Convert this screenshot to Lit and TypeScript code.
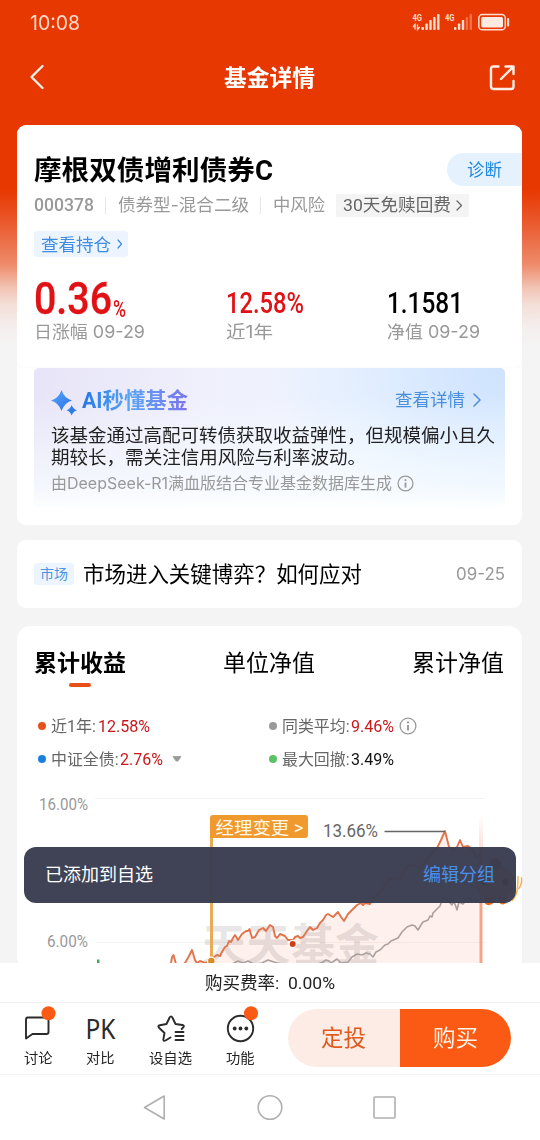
import { LitElement, html, css, svg } from "lit";
import { customElement, property } from "lit/decorators.js";
import { styleMap } from "lit/directives/style-map.js";

/** One line of text that takes up exactly `w` pixels. */
@customElement("fit-label")
class FitLabel extends LitElement {
  @property({ type: Number }) w = 0;
  @property({ type: Number }) scale = 1;
  static styles = css`
    :host { display: block; flex: none; white-space: nowrap; }
    .text { display: inline-block; transform-origin: 0 50%; }
    .box { display: block; }
  `;
  firstUpdated() {
    this.measure();
    document.fonts.ready.then(() => this.measure());
  }
  measure() {
    const el = this.renderRoot.querySelector(".text") as HTMLElement;
    const natural = parseFloat(getComputedStyle(el).width);
    if (natural > 0) this.scale = this.w / natural;
  }
  render() {
    return html`<span class="box" style=${styleMap({ width: this.w + "px" })}
      ><span class="text" style=${styleMap({ transform: `scaleX(${this.scale})` })}><slot></slot></span></span>`;
  }
}

const fundLine =
  "171,963 172,957 173.5,955 176,964 180,966 185,963 189,956 192,950 195,960 197,963 200,961 205,963 211,961 214,957 217,955 220,956 222,952 225,947 227,946 229,941 231,942 233,938 235,935 238,940 242,934 246,931 248,931 249.5,929 252,938 255,937 259,930 263,928 266,931 270,925 273,927 275,936 277,938 280,934 285,936 288,940 293,940 295,937 298,936 300,938 303,937 307,931 310,927 313,930 317,928 320,923 323,920 326,915 328,914 333,917 338,912 341,917 344,921 348,914 352,910 357,905 361,903 363,905 365,903 370,904 374,897 382,890 388,880 395,878 400,880 407,866 413,865 420,868 430,855 437,848 441,840 445,831 449,847 453,850 457,847 460,840 463,847 468,846 472,849 477,858 481,853";
const indexLine =
  "232,964 238,961 243,963 248,961 254,964 262,963 268,960 274,962 290,966 318,964 323,962 326,960 329,961 331,963 334,961 337,959 341,963 348,962 352,957 357,954 362,955 366,953 370,954 373,957 376,952 380,950 385,945 388,944 391,941 398,938 402,932 407,927 412,925 415,926 418,930 421,925 423,922 428,920 430,916 432,917 433,913 438,908 440,906 443,898 447,900 452,905 453,902 455,904 457,910 459,902 463,904 468,898 481,903";

@customElement("app-root")
export class AppRoot extends LitElement {
  static styles = css`
    :host {
      display: block; position: relative; width: 540px; height: 1140px; overflow: hidden;
      font-family: Roboto, "Noto Sans CJK SC", sans-serif; color: #000;
      background: #f4f4f4;
    }
    * { box-sizing: border-box; }
    svg { display: block; flex: none; }
    .wide { font-family: Inter, "Noto Sans CJK SC", sans-serif; }
    .screen { display: flex; flex-direction: column; height: 1140px; }
    .scroll {
      height: 962.5px; overflow: hidden; padding: 0 18px 0 17px; flex: none;
      background: linear-gradient(#e83802 0, #e83802 190px, #ea5c30 225px, #ee8c6c 265px, #f2c4b5 288px, #f3dfd8 305px, #f4f0ef 330px, #f4f4f4 348px);
    }
    .row { display: flex; align-items: center; }

    .status { height: 46px; padding: 0 0 0 13px; justify-content: space-between; }
    .status-icons { margin: 0 11px 0 0; }
    .clock { color: #ffd9cb; font-size: 20px; line-height: 24px; }
    .nav { height: 62px; padding: 0 6px 0 11px; }
    .nav-title { color: #fff; font-weight: 700; font-size: 22.5px; line-height: 30px; margin: 2px auto 0 178px; }

    .card { background: #fff; border-radius: 9px; width: 505px; }
    .fund { margin-top: 17px; height: 400px; overflow: hidden; background: #fcfcfc; }
    .summary { height: 242px; background: #fff; border-radius: 9px; padding: 28px 0 0 17px; }
    .headline { height: 33px; justify-content: space-between; }
    .fund-name { font-size: 27.5px; font-weight: 700; line-height: 36px; margin-top: 2px; }
    .diagnose { width: 75px; height: 33px; border-radius: 17px 0 0 17px; background: #e5f2fe; color: #1f87e0; font-size: 17.3px; padding: 0 0 2px 20px; }
    .meta { height: 24px; margin-top: 7px; font-size: 17.3px; line-height: 24px; color: #999; }
    .code { font-size: 18px; font-weight: 500; }
    .bar { width: 1px; height: 17px; background: #e6e6e6; margin: 0 11.5px 0 11px; }
    .bar2 { margin: 0 11.5px; }
    .fee { height: 23px; background: #f4f4f4; color: #666; padding: 0 6px 0 7px; margin-left: 11.5px; gap: 5px; }
    .hold { width: 94px; height: 26px; margin-top: 14px; padding: 0 0 1px 7px; gap: 6px; background: #ebf4ff; border-radius: 3px; color: #3f8ce0; font-size: 17.3px; }
    .figures { margin-top: 18px; display: grid; grid-template-columns: 192px 160.5px auto; }
    .figure { height: 45px; display: flex; align-items: flex-end; }
    .value { font-weight: 500; font-size: 29px; line-height: 34px; }
    .big { font-size: 45px; line-height: 38px; margin-bottom: 2px; -webkit-text-stroke: .3px #e60d10; }
    .pct { font-size: 24px; line-height: 22px; margin-left: 1px; font-weight: 500; }
    .red { color: #e01216; }
    .caption { font-size: 17.3px; line-height: 24px; color: #999; }

    .ai-wrap { background: #fff; height: 158px; margin-top: 1px; padding: 0 17px; }
    .ai {
      height: 140px; border-radius: 5px; padding: 20px 0 0 17px;
      background:
        linear-gradient(rgba(255,255,255,0) 20%, rgba(248,252,255,.75) 85%, #fdfeff 100%),
        radial-gradient(ellipse 240px 160px at 100% 0, #cfe3fe, rgba(233,243,255,0)),
        linear-gradient(100deg, #e7e4f7, #eff0fc 35%, #eff6ff 70%, #e3f0ff);
    }
    .ai-head { height: 26px; }
    .ai-title { font-size: 21.3px; font-weight: 700; line-height: 26px; margin-left: 4px; }
    .grad { background: linear-gradient(90deg, #2478e8, #5aa5f4 45%, #6c8af0 75%, #7c74e8); -webkit-background-clip: text; background-clip: text; color: transparent; }
    .more { margin-left: auto; margin-right: 24.5px; gap: 8px; color: #4a8fdc; font-size: 17.4px; line-height: 24px; margin-top: -2px; }
    .ai-text { font-size: 18.5px; line-height: 21.5px; color: #222; margin-top: 12px; }
    .ai-note { font-size: 16px; line-height: 22px; height: 22px; color: #999; margin-top: 3px; gap: 5px; }

    .news { height: 68px; margin-top: 15px; padding: 0 17px; border-radius: 9px; }
    .tag { width: 40px; height: 22px; border-radius: 3px; background: #ebf4ff; color: #4d94e2; font-size: 14px; justify-content: center; margin-right: 9px; padding-bottom: 2px; }
    .news-title { font-size: 21.4px; line-height: 30px; margin-top: 1px; }
    .date { margin-left: auto; color: #999; font-size: 17px; }

    .chart-card { margin-top: 18px; height: 345px; padding: 22px 18px 0 17px; border-radius: 14px; }
    .tabs { justify-content: space-between; height: 32px; font-size: 22.7px; line-height: 32px; }
    .active { font-weight: 700; }
    .underline { width: 22px; height: 4px; border-radius: 2px; background: #e8501a; margin: 3px 0 0 35px; }
    .legend { display: grid; grid-template-columns: 231px auto; grid-auto-rows: 33px; margin: 22px 0 0 4px; font-size: 16px; color: #666; }
    .dot { width: 8px; height: 8px; border-radius: 50%; margin-right: 5px; flex: none; }
    .name { margin-top: -1px; }
    .num { margin: 1px 0 0 1.5px; }
    .black { color: #111; }
    .crimson { color: #c8181c; }
    .gap { margin-left: 5px; }
    .chart { margin: 10px 0 0 -17px; overflow: visible; }

    .toast {
      position: absolute; left: 24px; top: 847px; width: 492px; height: 55.5px; border-radius: 12px;
      background: rgba(58, 61, 79, .97); padding: 0 21px 0 21px; justify-content: space-between;
      color: #fff; font-size: 18px; line-height: 26px;
    }
    .edit { color: #4a90ea; }

    .rate { height: 39.5px; padding-bottom: 1px; background: #fff; justify-content: center; font-size: 17.4px; color: #222; flex: none; }
    .actions { height: 72.5px; background: #fff; border-top: 1px solid #f1f1f1; border-bottom: 1px solid #f4f4f4; flex: none; padding-left: 3px; }
    .action { width: 70px; height: 70px; display: flex; flex-direction: column; align-items: center; padding-top: 5px; font-size: 14.2px; line-height: 20px; color: #222; gap: 4px; }
    .action svg { overflow: visible; }
    .action.pk { width: 55px; }
    .action.star { width: 85px; }
    .action.fn { width: 55px; }
    .buttons { display: flex; margin-left: 20px; height: 58px; }
    .btn { width: 111.5px; display: flex; align-items: center; justify-content: center; font-size: 22.5px; line-height: 32px; }
    .plan { background: #fcece5; color: #df5a1c; border-radius: 29px 0 0 29px; }
    .buy { background: #fb5a14; color: #fff1e4; border-radius: 0 29px 29px 0; }
    .sysnav { flex: 1; background: #fff; }
  `;

  chevron(w: number, h: number, stroke: string, width: number) {
    return html`<svg width=${w + 2} height=${h + 2} viewBox="-1 -1 ${w + 2} ${h + 2}" fill="none" stroke=${stroke} stroke-width=${width}>
      <path d="M0 0L${w} ${h / 2}L0 ${h}" stroke-linecap="round" stroke-linejoin="round" /></svg>`;
  }

  info(size: number, color = "#999") {
    return html`<svg width=${size} height=${size} viewBox="0 0 18 18" fill="none" stroke=${color}>
      <circle cx="9" cy="9" r="7.9" stroke-width="1.3" />
      <circle cx="9" cy="5.4" r="1.1" fill=${color} stroke="none" /><path d="M9 8v5.4" stroke-width="1.9" /></svg>`;
  }

  statusIcons() {
    const bars = (x: number, dim: number) =>
      [3, 6.5, 10, 13, 16].map((h, i) => svg`<rect x=${x + i * 3.9} y=${17 - h} width="2.4" height=${h} rx=".8" opacity=${i >= dim ? 0.35 : 1} />`);
    return html`<svg class="status-icons" width="110" height="20" viewBox="0 0 110 20" fill="#ffdccf">
      <text x="11.5" y="8.2" font-size="9.5" font-weight="700" textLength="9.5" lengthAdjust="spacingAndGlyphs">4G</text>
      <path d="M12 14l2-2.5v5M16.500 11.500v5l2.200-2.500" stroke="#ffdccf" stroke-width="1.300" fill="none" />
      ${bars(20.5, 9)}
      <text x="44" y="8.2" font-size="9.500" font-weight="700" textLength="9.500" lengthAdjust="spacingAndGlyphs">4G</text>
      ${bars(53, 3)}
      <rect x="77.800" y="1.600" width="26.500" height="15.200" rx="3.600" fill="none" stroke="#ffdccf" stroke-width="1.500" />
      <rect x="80.200" y="4" width="21.800" height="10.400" rx="1.600" fill="#ffeae2" />
      <rect x="106" y="5" width="2.200" height="8.500" rx="1" /></svg>`;
  }

  chart() {
    return html`<svg class="chart" width="505" height="180" viewBox="17 785 505 180">
      <defs><linearGradient id="glow" x1="0" y1="0" x2="0" y2="1"><stop offset="0" stop-color="#f9a58a" stop-opacity="0" /><stop offset="1" stop-color="#f9a58a" stop-opacity=".4" /></linearGradient></defs>
      <path d="M95 798.500H485M95 942.500H485" stroke="#f3f3f3" />
      <polygon points="${fundLine} 481,966 171,966" fill="#fef1ed" />
      <path d="M300 942.500H481" stroke="#f6e6e1" />
      <text x="202" y="961" font-size="44" font-weight="700" fill="#4a3c3a" fill-opacity=".15" textLength="177">天天基金</text>
      <polyline points=${indexLine} fill="none" stroke="#aaa19f" stroke-width="1.600" stroke-linejoin="round" />
      <polyline points=${fundLine} fill="none" stroke="#e2744c" stroke-width="1.900" stroke-linejoin="round" />
      <rect x="479" y="815" width="4" height="40" fill="url(#glow)" />
      <rect x="479.500" y="852" width="3" height="112" fill="#f3a48b" />
      <g fill="#999" font-size="16">
        <text x="39" y="810" textLength="49" lengthAdjust="spacingAndGlyphs">16.00%</text>
        <text x="47" y="947" textLength="41" lengthAdjust="spacingAndGlyphs">6.00%</text>
      </g>
      <text x="323" y="837" font-size="17.500" fill="#666" textLength="55" lengthAdjust="spacingAndGlyphs">13.66%</text>
      <path d="M384.500 831.500H445" stroke="#666" stroke-width="1.300" />
      <rect x="210" y="830" width="3" height="130" fill="#e9ab55" />
      <path d="M210 838V818q0-3 3-3H305q3 0 3 3V835q0 3-3 3Z" fill="#f0992e" />
      <text x="215.500" y="833.500" font-size="17.600" fill="#fff8e8" textLength="88" lengthAdjust="spacingAndGlyphs">经理变更 &gt;</text>
      <circle cx="211.300" cy="961" r="4.500" fill="#fff8e8" /><circle cx="211.300" cy="961" r="3.200" fill="#d98a24" />
      <circle cx="292.700" cy="944" r="4.200" fill="#fff" /><circle cx="292.700" cy="944" r="3" fill="#cf3e14" />
      <rect x="97" y="959.500" width="2.500" height="4" fill="#45ad4d" />
      <ellipse cx="495" cy="882" rx="20" ry="18" fill="#f6a98c" /><circle cx="495" cy="864" r="6" fill="#b04a28" />
      <circle cx="484" cy="882" r="3" fill="#123" /><circle cx="505" cy="882" r="3" fill="#123" />
      <path d="M484 897h11v5l-3 2q-4 2.500-7-.5ZM498 897h9v5q-3 4-7 1.500Z" fill="#f06418" />
      <path d="M512 901q5-6 5.500-13t.5-12" fill="none" stroke="#fdb94e" stroke-width="1.600" />
      <path d="M518.500 889q4-5 3-12" fill="none" stroke="#f8a860" stroke-width="1.300" />
    </svg>`;
  }

  render() {
    return html`<div class="screen">
      <div class="scroll">
        <div class="row status"><fit-label class="clock wide" w="50">10:08</fit-label>${this.statusIcons()}</div>
        <div class="row nav">
          <svg width="18" height="26" viewBox="0 0 18 26" fill="none" stroke="#fff2ec" stroke-width="2.300" stroke-linecap="round" stroke-linejoin="round"><path d="M14.500 2L3.500 13L14.500 24" /></svg>
          <fit-label class="nav-title" w="91">基金详情</fit-label>
          <svg width="27" height="27" viewBox="0 0 27 27" fill="none" stroke="#ffeee7" stroke-width="2.400" stroke-linecap="round" stroke-linejoin="round"><path d="M9.500 2.500H4.500q-2.500 0-2.500 2.500V22.500q0 2.500 2.500 2.500H22q2.500 0 2.500-2.500V17M12 15L24 3M16.500 2.500H24.500V10" /></svg>
        </div>

        <div class="card fund">
          <div class="summary">
            <div class="row headline">
              <fit-label class="fund-name" w="239">摩根双债增利债券C</fit-label>
              <div class="row diagnose"><fit-label w="35">诊断</fit-label></div>
            </div>
            <div class="row meta">
              <fit-label class="code" w="60">000378</fit-label><span class="bar"></span>
              <fit-label class="wide" w="131">债券型-混合二级</fit-label><span class="bar bar2"></span>
              <fit-label w="52">中风险</fit-label>
              <div class="row fee"><fit-label w="108">30天免赎回费</fit-label>${this.chevron(4.5, 9, "#666", 1.3)}</div>
            </div>
            <div class="row hold"><fit-label w="70">查看持仓</fit-label>${this.chevron(3.500, 8, "#3f8ce0", 1.200)}</div>
            <div class="figures">
              <div>
                <div class="figure red"><fit-label class="value big" w="78">0.36</fit-label><fit-label class="pct" w="13">%</fit-label></div>
                <fit-label class="caption wide" w="111">日涨幅 09-29</fit-label>
              </div>
              <div>
                <div class="figure red"><fit-label class="value" w="78">12.58%</fit-label></div>
                <fit-label class="caption wide" w="47">近1年</fit-label>
              </div>
              <div>
                <div class="figure"><fit-label class="value" w="76">1.1581</fit-label></div>
                <fit-label class="caption wide" w="93">净值 09-29</fit-label>
              </div>
            </div>
          </div>
          <div class="ai-wrap"><div class="ai">
            <div class="row ai-head">
              <svg width="27" height="26" viewBox="0 0 27 26" overflow="visible"><defs><linearGradient id="spark" x1="0" y1="0" x2="1" y2="1"><stop offset="0" stop-color="#55a8fb" /><stop offset="1" stop-color="#2b6fe6" /></linearGradient></defs>
                <path d="M10.500 2Q13 10 21 12.500Q13 15 10.500 23Q8 15 0 12.500Q8 10 10.500 2Z" fill="url(#spark)" />
                <path d="M20.700 17Q22 21 26 22.300Q22 23.600 20.700 27.500Q19.400 23.600 15.500 22.300Q19.400 21 20.700 17Z" fill="#2f7de6" /></svg>
              <fit-label class="ai-title" w="106"><span class="grad">AI秒懂基金</span></fit-label>
              <div class="row more"><fit-label w="70">查看详情</fit-label>${this.chevron(6, 12, "#4a8fdc", 1.500)}</div>
            </div>
            <div class="ai-text"><fit-label w="444">该基金通过高配可转债获取收益弹性，但规模偏小且久</fit-label><fit-label w="315">期较长，需关注信用风险与利率波动。</fit-label></div>
            <div class="row ai-note"><fit-label class="wide" w="341">由DeepSeek-R1满血版结合专业基金数据库生成</fit-label>${this.info(17)}</div>
          </div></div>
        </div>

        <div class="card row news">
          <div class="row tag"><fit-label w="28">市场</fit-label></div>
          <fit-label class="news-title" w="279">市场进入关键博弈？如何应对</fit-label>
          <fit-label class="date wide" w="49">09-25</fit-label>
        </div>

        <div class="card chart-card">
          <div class="row tabs"><fit-label class="active" w="92">累计收益</fit-label><fit-label w="92">单位净值</fit-label><fit-label w="92">累计净值</fit-label></div>
          <div class="underline"></div>
          <div class="legend">
            <div class="row"><span class="dot" style="background:#e8501a"></span><fit-label class="name" w="45">近1年:</fit-label><fit-label class="num crimson" w="52">12.58%</fit-label></div>
            <div class="row"><span class="dot" style="background:#999"></span><fit-label class="name" w="67.500">同类平均:</fit-label><fit-label class="num crimson" w="43">9.46%</fit-label><span class="gap">${this.info(18)}</span></div>
            <div class="row"><span class="dot" style="background:#1a80e0"></span><fit-label class="name" w="67.500">中证全债:</fit-label><fit-label class="num crimson" w="43">2.76%</fit-label>
              <svg width="10" height="6" viewBox="0 0 10 6" style="margin-left:9px"><path d="M1 .500H9L6 5H4Z" fill="#999" stroke="#999" stroke-linejoin="round" stroke-width=".800" /></svg></div>
            <div class="row"><span class="dot" style="background:#5bc264"></span><fit-label class="name" w="67.500">最大回撤:</fit-label><fit-label class="num black" w="43">3.49%</fit-label></div>
          </div>
          ${this.chart()}
        </div>
      </div>

      <div class="row rate"><fit-label w="130">购买费率:&nbsp; 0.00%</fit-label></div>
      <div class="row actions">
        <div class="action">
          <svg width="36" height="36" viewBox="0 0 36 36"><path d="M8 9.500H26.500q2 0 2 2V24q0 2-2 2H12.500L6 30.500V11.500q0-2 2-2Z" fill="none" stroke="#2b2b2b" stroke-width="1.900" stroke-linejoin="round" /><circle cx="28.500" cy="5.300" r="7" fill="#fb5a14" /></svg>
          <fit-label w="28.500">讨论</fit-label>
        </div>
        <div class="action pk">
          <svg width="36" height="36" viewBox="0 0 36 36"><text x="2.500" y="31" font-family="Noto Sans" font-size="27" fill="#2b2b2b" textLength="30" lengthAdjust="spacingAndGlyphs">PK</text></svg>
          <fit-label w="28.500">对比</fit-label>
        </div>
        <div class="action star">
          <svg width="36" height="36" viewBox="0 0 36 36" fill="none" stroke="#2b2b2b" stroke-width="1.900" stroke-linecap="round" stroke-linejoin="round"><path d="M17.500 29.500L12.500 32.500q-2.400 1.200-2.100-1.400L11.500 25L6 19.700q-1.600-2 .9-2.500L13.500 16L16.600 9.500q1.400-2.200 2.800 0L22.500 16L29.300 17q2.500.5.900 2.400L28.700 21M22.500 24H30.500M22.500 28H30.500M22.500 32H30.500" /></svg>
          <fit-label w="43">设自选</fit-label>
        </div>
        <div class="action fn">
          <svg width="36" height="36" viewBox="0 0 36 36"><circle cx="17.500" cy="20.500" r="12.700" fill="none" stroke="#2b2b2b" stroke-width="1.900" /><g fill="#2b2b2b"><circle cx="11.700" cy="20.500" r="1.900" /><circle cx="17.500" cy="20.500" r="1.900" /><circle cx="23.300" cy="20.500" r="1.900" /></g><circle cx="28" cy="5.300" r="7" fill="#fb5a14" /></svg>
          <fit-label w="28.500">功能</fit-label>
        </div>
        <div class="buttons"><div class="btn plan"><fit-label w="45">定投</fit-label></div><div class="btn buy"><fit-label w="45">购买</fit-label></div></div>
      </div>
      <div class="sysnav">
        <svg width="540" height="65" viewBox="0 1075 540 65" fill="none" stroke="#b0b0b0" stroke-width="1.600" stroke-linejoin="round">
          <path d="M144.500 1107.500L164.200 1096V1119Z" /><circle cx="270" cy="1107.500" r="11.800" /><rect x="374" y="1097" width="21" height="21" rx="1" /></svg>
      </div>
      <div class="row toast"><fit-label w="108">已添加到自选</fit-label><fit-label class="edit" w="72">编辑分组</fit-label></div>
    </div>`;
  }
}
